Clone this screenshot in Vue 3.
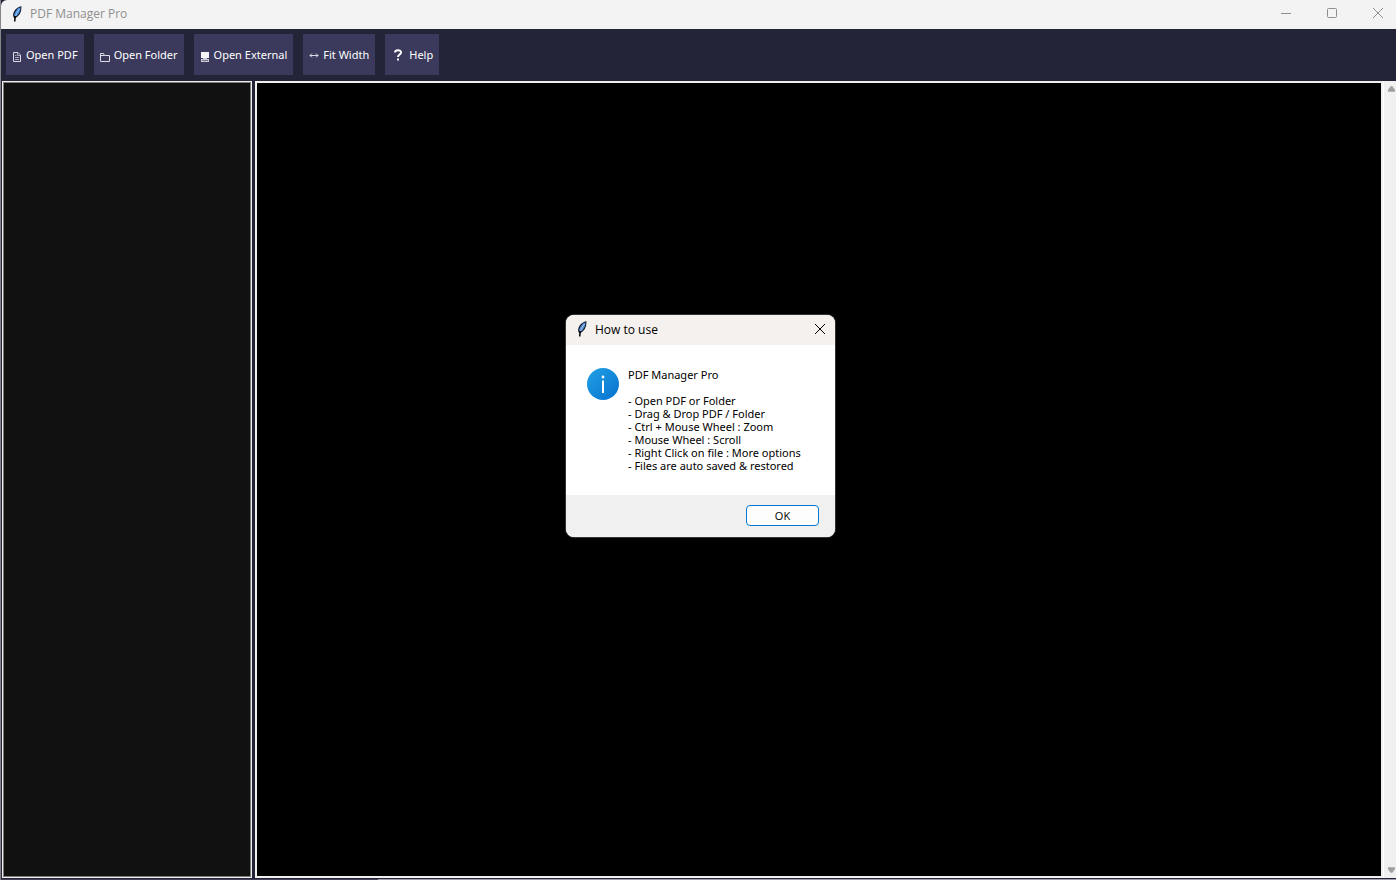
<script setup>
import { ref } from 'vue'

const helpOpen = ref(true)
const tools = [
  { id: 'pdf', label: 'Open PDF' },
  { id: 'folder', label: 'Open Folder' },
  { id: 'external', label: 'Open External' },
  { id: 'fit', label: 'Fit Width' },
  { id: 'help', label: 'Help' },
]
const tips = [
  '- Open PDF or Folder',
  '- Drag & Drop PDF / Folder',
  '- Ctrl + Mouse Wheel : Zoom',
  '- Mouse Wheel : Scroll',
  '- Right Click on file : More options',
  '- Files are auto saved & restored',
]
function run(id) {
  if (id === 'help') helpOpen.value = true
}
</script>

<template>
  <div class="window">
    <header class="titlebar">
      <svg class="feather" viewBox="0 0 10 16" aria-hidden="true">
        <path d="M9.500.3C6 .8 2.500 3.500 1.300 7.500c-.5 2 0 3.500 1 4.700C5.800 11.500 8.500 8 9.200 4z" fill="#0c1422" />
        <path d="M8.600 1.200C5.500 2.200 3 5 2.100 9l1.200 2C6.500 9 8.500 5.500 8.600 1.200z" fill="#4d91df" />
        <path d="M7.500 3 5 6.500 3 11" stroke="#a5cdf8" stroke-width=".8" fill="none" />
        <path d="M3.200 10 2.700 15.500" stroke="#000" stroke-width="1.500" />
      </svg>
      <h1 class="title">PDF Manager Pro</h1>
      <div class="controls">
        <button type="button" class="control" aria-label="Minimize">
          <svg viewBox="0 0 12 12"><path d="M1 6.500h10" /></svg>
        </button>
        <button type="button" class="control" aria-label="Maximize">
          <svg viewBox="0 0 12 12"><rect x="1.500" y="1.500" width="9" height="9" rx="1" /></svg>
        </button>
        <button type="button" class="control" aria-label="Close">
          <svg viewBox="0 0 12 12"><path d="m1 1 10 10M11 1 1 11" /></svg>
        </button>
      </div>
    </header>

    <nav class="toolbar" aria-label="Tools">
      <button v-for="tool in tools" :key="tool.id" type="button" class="tool" @click="run(tool.id)">
        <svg v-if="tool.id === 'pdf'" class="icon low" viewBox="0 0 10 12" aria-hidden="true">
          <path d="M1.500 1.500h4.500l2.500 2.500v6.500h-7z" class="line" />
          <path d="M5.500 1.500v3h3M3 4.500h1.500M3 6.500h4M3 8.500h4" class="line thin" />
        </svg>
        <svg v-else-if="tool.id === 'folder'" class="icon low" viewBox="0 0 10 12" aria-hidden="true">
          <path d="M.5 10.500v-8h3l1 2h5v6zM.5 4.500h4" class="line" />
        </svg>
        <svg v-else-if="tool.id === 'external'" class="icon low" viewBox="0 0 10 12" aria-hidden="true">
          <path d="M1 1h8v6H1z" fill="#f4f4f8" />
          <path d="M3 7h4v1H3zM1 8h8v3H1z" fill="#c9c8d4" />
          <path d="M2 9.500h6" stroke="#77758c" />
        </svg>
        <svg v-else-if="tool.id === 'fit'" class="icon" viewBox="0 0 10 12" aria-hidden="true">
          <path d="M1 6.500h8M3 4.500l-2 2 2 2M7 4.500l2 2-2 2" class="line" />
        </svg>
        <svg v-else class="icon help" viewBox="0 0 10 12" aria-hidden="true">
          <path d="M2 3.500C2.200.6 8 .3 8 3.500 8 5.500 5 5.500 5 8" fill="none" stroke="#fff" stroke-width="2" />
          <path d="M4 9.500h2v2H4z" fill="#fff" />
        </svg>
        <span>{{ tool.label }}</span>
      </button>
    </nav>

    <main class="workspace">
      <aside class="files" aria-label="Files"></aside>
      <section class="page" aria-label="Page"></section>
      <div class="scrollbar">
        <button type="button" class="scroll" aria-label="Scroll up">
          <svg viewBox="0 0 10 8"><path d="M4 1h2l3 4v2H1V5z" /></svg>
        </button>
        <button type="button" class="scroll" aria-label="Scroll down">
          <svg viewBox="0 0 10 8"><path d="M1 1h8v2L6 7H4L1 3z" /></svg>
        </button>
      </div>
    </main>
    <footer class="edge"></footer>

    <div v-if="helpOpen" class="dialog" role="dialog" aria-labelledby="help-title">
      <div class="dialog-bar">
        <svg class="feather" viewBox="0 0 10 16" aria-hidden="true">
          <path d="M9.500.3C6 .8 2.500 3.500 1.300 7.500c-.5 2 0 3.500 1 4.700C5.800 11.500 8.500 8 9.200 4z" fill="#0c1422" />
          <path d="M8.600 1.200C5.500 2.200 3 5 2.100 9l1.200 2C6.500 9 8.500 5.500 8.600 1.200z" fill="#5b8fce" />
          <path d="M7.500 3 5 6.500 3 11" stroke="#a5cdf8" stroke-width=".8" fill="none" />
          <path d="M3.200 10 2.700 15.500" stroke="#000" stroke-width="1.500" />
        </svg>
        <h2 id="help-title" class="dialog-title">How to use</h2>
        <button type="button" class="dialog-close" aria-label="Close dialog" @click="helpOpen = false">
          <svg viewBox="0 0 12 12"><path d="m1 1 10 10M11 1 1 11" /></svg>
        </button>
      </div>
      <div class="dialog-body">
        <svg class="info" viewBox="0 0 32 32" aria-hidden="true">
          <defs>
            <linearGradient id="info-fill" x1="0" y1="0" x2="1" y2="1">
              <stop offset="0" stop-color="#22a2e4" />
              <stop offset="1" stop-color="#0671cf" />
            </linearGradient>
          </defs>
          <circle cx="16" cy="16" r="16" fill="url(#info-fill)" />
          <path d="M16 12.500V25" stroke="#fff" stroke-width="2" />
          <circle cx="16" cy="9" r="1.400" fill="#fff" />
        </svg>
        <div class="message">
          <p class="lead">PDF Manager Pro</p>
          <p v-for="tip in tips" :key="tip">{{ tip }}</p>
        </div>
      </div>
      <div class="dialog-foot">
        <button type="button" class="ok" @click="helpOpen = false">OK</button>
      </div>
    </div>
  </div>
</template>

<style>
body {
  margin: 0;
  background: #000;
}
</style>

<style scoped>
.window {
  position: relative;
  box-sizing: border-box;
  display: flex;
  flex-direction: column;
  min-height: 100vh;
  border-left: 1px solid #85858b;
  background: #232438;
  font-family: "Open Sans", "Noto Sans", sans-serif;
  font-size: 12px;
  line-height: 16px;
}
button {
  margin: 0;
  padding: 0;
  border: 0;
  background: none;
  color: inherit;
  font: inherit;
}
h1, h2, p {
  margin: 0;
  font-size: inherit;
  font-weight: 400;
}
.titlebar {
  display: flex;
  align-items: center;
  height: 29px;
  padding-left: 11px;
  border-top-left-radius: 6px;
  background: #f3f3f3;
  color: #8f8f8f;
}
.feather {
  width: 10px;
  height: 16px;
  margin-bottom: 2px;
}
.title {
  flex: 1;
  margin-left: 8px;
  padding-bottom: 2px;
}
.controls {
  display: flex;
  align-self: stretch;
}
.control {
  display: flex;
  align-items: center;
  justify-content: flex-end;
  width: 46px;
  padding: 0 12px 3px 0;
}
.control svg,
.dialog-close svg {
  width: 12px;
  height: 12px;
  fill: none;
  stroke: currentColor;
}
.toolbar {
  display: flex;
  gap: 10px;
  padding: 5px 5px 6px;
}
.tool {
  display: flex;
  align-items: center;
  gap: 4px;
  height: 41px;
  padding: 0 6px;
  background: #3b3a5c;
  color: #fff;
  font-family: "Noto Sans", "Open Sans", sans-serif;
  font-size: 11px;
}
.icon {
  width: 10px;
  height: 12px;
}
.low {
  margin-top: 4px;
}
.help {
  margin: 0 2px;
}
.line {
  fill: none;
  stroke: #dddce6;
}
.thin {
  stroke: #a9a8ba;
}
.workspace {
  display: flex;
  flex: 1;
}
.files {
  box-sizing: border-box;
  width: 250px;
  margin: 0 3px 0 1px;
  border: 1px solid #f0f0f0;
  outline: 1px solid #7b7b7b;
  outline-offset: -2px;
  background: #111;
}
.page {
  flex: 1;
  border: 2px solid #f0f0f0;
  background: #000;
}
.scrollbar {
  display: flex;
  flex-direction: column;
  justify-content: space-between;
  width: 12px;
  border-left: 1px solid #fff;
  background: #f0f0f0;
}
.scroll {
  display: flex;
  justify-content: flex-end;
  padding: 4px 0;
}
.scroll svg {
  width: 9px;
  height: 8px;
  fill: #a0a0a0;
}
.edge {
  height: 1px;
  margin-top: 1px;
  background: linear-gradient(to right, #45415a 27%, #a19eb0 27%);
}
.dialog {
  position: absolute;
  top: 315px;
  left: 565px;
  width: 269px;
  overflow: hidden;
  border-radius: 8px;
  box-shadow: 0 0 0 1px #333;
  background: #fff;
  color: #000;
}
.dialog-bar {
  display: flex;
  align-items: center;
  height: 30px;
  padding-left: 11px;
  background: #f4f1ee;
}
.dialog-title {
  flex: 1;
  margin-left: 8px;
}
.dialog-close {
  display: flex;
  align-items: center;
  justify-content: center;
  align-self: stretch;
  width: 31px;
  padding-bottom: 2px;
}
.dialog-body {
  display: flex;
  gap: 9px;
  padding: 23px 21px;
}
.info {
  flex: none;
  width: 32px;
  height: 32px;
}
.message {
  font-family: "Noto Sans", "Open Sans", sans-serif;
  font-size: 11px;
  line-height: 13px;
  white-space: nowrap;
}
.lead {
  margin-bottom: 13px;
}
.dialog-foot {
  display: flex;
  justify-content: flex-end;
  padding: 10px 16px 11px;
  background: #f0f0f0;
}
.ok {
  width: 73px;
  height: 21px;
  border: 1px solid #0078d4;
  border-radius: 4px;
  background: #fdfdfd;
  font-size: 11px;
}
</style>
